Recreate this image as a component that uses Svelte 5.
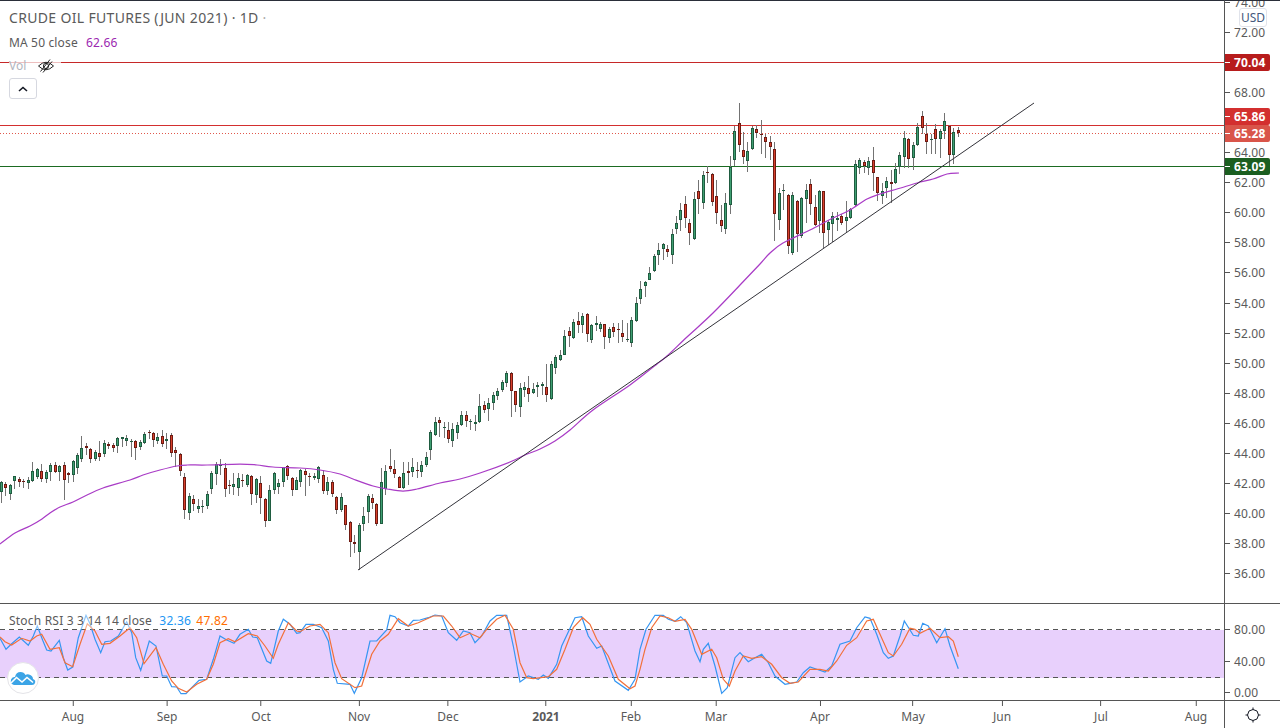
<script>
  const groups = [
    [420, `G 187 217 183 250|R 193 205 185 228|G 196 223 192 240|G 169 184 167 208|R 178 185 172 200|R 184 185 176 204|G 179 190 170 208|G 154 184 127 186|G 148 170 144 178|R 152 176 133 187|G 155 176 150 190|G 136 155 128 184|R 136 155 127 160|G 139 155 135 184|R 136 181 127 240|R 160 166 155 190|G 124 166 120 186|G 106 143 98 163|G 85 118 48 125|R 79 85 70 104|R 88 118 85 128|G 97 118 90 122|R 100 110 63 124|G 70 103 60 112|R 73 79 65 88|R 76 85 70 95|G 55 79 52 100|G 52 58 50 80|G 55 64 45 78|G 63 64 58 112|R 64 85 60 120|G 65 82 60 90|G 43 70 35 72|R 37 40 30 58|R 40 61 35 82|G 52 64 40 72|R 49 73 30 82|G 58 64 40 86|R 46 100 40 110|R 91 100 82 140|R 103 154 100 168|R 172 271 160 296|G 229 280 220 300|R 238 253 225 272|G 259 268 238 278|G 259 260 240 278|G 223 257 212 268|G 160 208 154 222|G 133 163 126 194|G 135 136 118 165|R 145 208 130 230|R 196 199 180 222|G 193 202 160 226|G 175 205 160 228`],
    [420, `R 181 182 162 200|G 166 194 162 200|R 169 221 165 254|G 178 224 175 250|R 190 233 168 282|R 238 302 235 320|G 211 302 195 302|G 160 209 155 222|G 190 200 178 222|G 142 185 140 200|R 139 167 135 180|R 175 209 170 228|G 181 209 172 210|G 151 185 148 200|R 154 164 148 228|R 169 170 158 198|G 169 173 160 180|G 142 176 138 190|R 166 212 150 222|G 187 212 172 225|R 187 221 180 232|R 232 269 228 282|G 232 269 220 275|R 256 314 255 330|R 307 365 302 410|R 367 371 345 400|G 316 395 310 450|G 289 311 262 332|G 229 275 222 308|R 235 248 222 268|R 253 311 250 318|G 187 311 145 312|G 154 208 135 224|R 139 146 87 155|R 148 161 120 175|R 172 203 168 205|G 160 205 126 208|R 154 158 125 195|G 142 157 113 172|R 151 152 125 175|G 136 155 122 170|G 112 136 97 140`],
    [350, `G 246 300 240 330|G 217 255 200 258|R 211 218 200 260|G 232 233 215 263|R 241 266 215 280|G 238 272 220 290|G 226 248 215 266|G 196 226 183 228|R 196 212 183 230|G 214 215 208 240|G 217 221 195 242|G 169 215 133 218|R 166 179 153 190|G 160 176 145 212|G 136 160 127 180|G 124 139 115 150|G 97 121 90 125|G 70 100 62 110|R 70 124 65 200|R 124 164 122 185|G 115 172 100 200|G 112 121 97 140|R 115 133 78 155|G 118 130 100 132|G 106 112 97 140|G 103 109 97 135|R 112 136 42 155|G 43 148 33 150|G 22 55 15 72|G 16 31 0 33`],
    [230, `G 319 374 300 376|R 304 317 290 352|G 277 323 268 326|R 274 284 247 310|G 259 286 250 310|R 253 311 250 335|G 286 329 282 338|G 280 284 258 302|G 283 298 275 305|R 283 320 282 356|G 298 325 290 338|R 292 305 280 320|R 298 299 280 338|R 310 320 270 335|G 328 329 278 335|G 271 338 262 350|G 220 274 200 276|G 178 208 153 222|G 157 169 152 200|G 130 149 112 150|G 79 124 72 126|G 61 74 40 104|G 43 58 38 90|R 58 65 45 80|G 13 76 -3 102`],
    [160, `G 190 206 168 222|G 151 181 128 212|R 133 175 108 205|R 190 220 178 254|G 118 238 97 240|R 94 116 60 162|G 46 130 33 147|R 37 38 18 68|R 43 127 40 138|R 109 160 60 192`],
    [95, `R 376 392 330 410|G 325 403 295 416|G 215 331 183 356|G 109 196 93 213|R 85 151 25 170|R 166 187 110 206|G 169 199 140 230|G 100 161 92 166|R 103 113 90 128|R 116 121 75 178|R 127 142 118 190|R 142 155 122 196|R 163 358 142 437|G 295 376 280 405|G 286 289 268 345|R 301 454 298 478|G 301 473 290 480|R 319 418 316 470|G 310 424 305 428|G 286 313 268 384|R 268 328 252 360|R 337 391 300 394|G 289 379 285 415|R 289 415 287 460|G 382 406 375 450|G 364 388 352 440|G 370 376 350 408|R 364 385 358 390|G 367 379 318 412|G 343 370 340 372|G 208 331 195 335|G 196 220 190 238|R 202 212 195 235|G 199 220 185 240|R 196 235 155 288|R 247 295 245 318|G 289 304 265 328|G 259 280 245 308|R 262 268 225 325|G 223 265 205 268|G 181 217 170 236|G 130 187 108 218|R 133 193 130 218|G 151 190 142 225|G 97 151 85 153|R 64 100 48 118|R 118 142 85 178|G 132 133 118 178|R 103 133 88 176|G 109 133 103 190|G 79 109 55 132|R 94 181 90 212|G 112 181 100 206|R 106 115 97 126`]
  ];
  const candles = [];
  for (const [off, txt] of groups) {
    for (const s of txt.split('|')) {
      const [c, a, b, w1, w2] = s.split(' ');
      const y = (v) => Math.round(off + Number(v) / 3);
      const x = Math.round(1 + candles.length * 4.47);
      const top = y(a);
      const h = Math.max(1, y(b) - top);
      candles.push({ x, up: c === 'G', top, h, wt: y(w1), wh: y(w2) - y(w1) });
    }
  }
  // Catmull-Rom smoothing so that the moving average reads as a curve.
  const smooth = (p) => {
    let out = `M${p[0][0]} ${p[0][1]}`;
    for (let i = 0; i < p.length - 1; i++) {
      const a = p[Math.max(0, i - 1)], b = p[i], c = p[i + 1], d = p[Math.min(p.length - 1, i + 2)];
      const c1x = b[0] + (c[0] - a[0]) / 6, c1y = b[1] + (c[1] - a[1]) / 6;
      const c2x = c[0] - (d[0] - b[0]) / 6, c2y = c[1] - (d[1] - b[1]) / 6;
      out += ` C${c1x.toFixed(1)} ${c1y.toFixed(1)} ${c2x.toFixed(1)} ${c2y.toFixed(1)} ${c[0]} ${c[1]}`;
    }
    return out;
  };
  const ma = smooth([[0,544],[15,533],[30,526],[42,519],[50,513],[60,507],[73,502],[87,495],[103,488],[130,480],[143,475],[160,470],[177,466],[187,465],[207,465],[240,464],[257,465],[273,467],[300,468],[320,470],[340,474],[353,479],[373,486],[387,489],[403,491],[417,489],[440,483],[460,479],[480,473],[510,462],[525,455],[540,449],[555,441],[570,430],[593,410],[630,385],[657,364],[667,356],[687,337],[713,313],[740,285],[760,264],[770,253],[783,243],[810,230],[833,218],[850,210],[867,199],[880,194],[897,189],[917,183],[933,179],[947,174],[959,173]]);

  const seg = (x0, y0, s) => s.trim().split(/\s+/).map((p) => {
    const [a, b] = p.split(',').map(Number);
    return (x0 + a / 3).toFixed(1) + ',' + (y0 + b / 3 - 603).toFixed(1);
  }).join(' ');
  const k = seg(0, 600, '0,112 18,145 35,128 58,108 85,133 100,105 112,75 128,118 140,147 153,150 178,118 190,170 203,207 218,198 235,110 258,43 270,68 285,115 302,155 315,122 332,120 355,105 380,62 395,95 407,170 422,208 448,120 468,135 487,225 500,225 515,257 530,258 543,278 558,278 575,260 597,238 620,235 640,175 660,105 680,117 702,127 720,100 745,85 758,108 772,110 800,180 812,187 835,90 850,55 870,70 890,97')
    + ' ' + seg(300, 605, '0,80 18,55 40,55 65,65 85,105 100,190 112,232 150,235 163,262 185,215 210,105 230,105 260,72 270,28 285,32 300,50 325,60 340,43 360,42 385,35 405,27 425,30 445,80 470,103 490,75 510,80 525,110 545,90 570,45 590,28 620,28 640,120 660,228 685,210 715,220 730,207 745,217 770,175 785,120 825,35 845,32 865,90 890,127 905,120 945,225 985,253 1005,220')
    + ' ' + seg(640, 605, '0,130 18,70 45,28 70,28 85,40 105,46 122,32 140,50 165,135 180,167 190,130 205,112 225,180 245,262 262,245 285,155 300,140 325,167 345,155 365,145 385,170 405,210 435,235 450,232 470,228 490,200 510,183 530,190 555,198 575,180 600,115 630,105 650,65 675,33 690,37 710,85 730,140 745,157 760,150 780,90 793,45 820,88 835,90 848,52 865,60 890,110 915,68 930,120 955,188');
  const d = seg(0, 600, '0,108 15,122 35,132 65,112 90,120 110,105 125,100 150,145 178,140 195,185 218,197 240,130 262,68 285,90 305,130 330,127 360,105 390,80 410,110 432,188 468,140 490,190 515,240 535,262 560,273 590,250 620,235 640,190 660,125 685,113 705,122 745,98 772,105 795,135 820,172 835,130 865,65 890,90')
    + ' ' + seg(300, 605, '0,77 30,60 60,55 85,80 105,170 125,218 165,245 185,240 215,145 240,105 265,85 295,38 325,60 355,50 400,30 430,30 455,60 480,95 510,82 540,95 560,70 590,40 615,28 640,70 660,170 680,215 700,218 745,212 770,190 795,130 820,65 848,35 870,55 890,100 925,150 955,220 990,248 1005,240')
    + ' ' + seg(640, 605, '0,190 15,130 35,65 60,30 85,35 105,46 135,40 155,70 185,145 215,130 230,155 250,220 268,240 285,195 310,150 335,157 365,152 395,175 425,215 450,232 475,228 510,190 540,190 565,195 590,165 620,118 650,95 680,45 700,40 720,85 745,140 760,150 785,115 810,67 825,70 840,82 870,67 900,95 925,92 940,105 955,152');

  const prices = [74,72,68,64,62,60,58,56,54,52,50,48,46,44,42,40,38,36].map((p) => ({
    t: p.toFixed(2), y: Math.round(32 + (72 - p) * 15.03)
  }));
  const marks = [
    { t: '70.04', top: 54, c: '#b71c1c' },
    { t: '65.86', top: 108, c: '#d32f2f' },
    { t: '65.28', top: 125, c: '#d9554a' },
    { t: '63.09', top: 158, c: '#1b5e20' }
  ];
  const subs = [{ t: '80.00', y: 26 }, { t: '40.00', y: 58 }, { t: '0.00', y: 89 }];
  const times = [
    { t: 'Aug', x: 73 }, { t: 'Sep', x: 167 }, { t: 'Oct', x: 261 }, { t: 'Nov', x: 359 },
    { t: 'Dec', x: 448 }, { t: '2021', x: 546, b: true }, { t: 'Feb', x: 631 }, { t: 'Mar', x: 716 },
    { t: 'Apr', x: 820 }, { t: 'May', x: 913 }, { t: 'Jun', x: 1002 }, { t: 'Jul', x: 1101 }, { t: 'Aug', x: 1196 }
  ];
</script>

<div class="chart">
  <div class="pane main">
    <svg class="plot" width="1224" height="603" viewBox="0 0 1224 603">
      <g class="crisp">
        <rect x="0" y="62" width="1224" height="1" fill="#c62828" />
        <rect x="0" y="125" width="1224" height="1" fill="#d32f2f" />
        <line x1="0" x2="1224" y1="133.5" y2="133.5" stroke="#e0584c" stroke-dasharray="1 2" />
        <rect x="0" y="166" width="1224" height="1" fill="#1b6b22" />
        {#each candles as c}
          <rect x={c.x} y={c.wt} width="1" height={c.wh} fill="#737373" />
          <rect x={c.x - 1} y={c.top} width="3" height={c.h} fill={c.up ? '#1f5c40' : '#6e1a12'} />
          {#if c.h > 2}
            <rect x={c.x} y={c.top + 1} width="1" height={c.h - 2} fill={c.up ? '#3f9f72' : '#d8402c'} />
          {/if}
        {/each}
      </g>
      <path d={ma} fill="none" stroke="#a93cc6" stroke-width="1.25" />
      <line x1="358" y1="570" x2="1034" y2="103" stroke="#33333a" stroke-width="1" />
    </svg>
    <div class="legend">
      <div class="row title">CRUDE OIL FUTURES (JUN 2021) · 1D <span class="faint">·</span></div>
      <div class="row ma">MA 50 close <span class="val">62.66</span></div>
      <div class="row vol">
        Vol
        <svg width="18" height="14" viewBox="0 0 18 14" fill="none" stroke="#222" stroke-width="1">
          <path d="M1.5 7 Q9 -0.5 16.5 7 Q9 14.5 1.5 7 Z" />
          <circle cx="9" cy="7" r="2.6" />
          <path d="M3.5 12.5 L13 0.5 M6 13.5 L15 2.5" />
        </svg>
      </div>
      <button class="collapse" aria-label="Collapse">
        <svg width="10" height="6" viewBox="0 0 10 6" fill="none" stroke="#131722" stroke-width="1.6"><path d="M1 5 L5 1.5 L9 5" /></svg>
      </button>
    </div>
  </div>

  <div class="axis price">
    {#each prices as p}
      <div class="tick" style="top:{p.y}px"><i></i><span>{p.t}</span></div>
    {/each}
    {#each marks as m}
      <div class="mark" style="top:{m.top - 1}px;background:{m.c}"><i></i><span>{m.t}</span></div>
    {/each}
    <div class="usd">USD</div>
  </div>

  <div class="pane sub">
    <svg class="plot" width="1224" height="97" viewBox="0 0 1224 97">
      <rect class="crisp" x="0" y="26" width="1224" height="48" fill="#e8d0fc" />
      <line x1="0" x2="1224" y1="25.5" y2="25.5" stroke="#555" stroke-dasharray="5 4" />
      <line x1="0" x2="1224" y1="73.5" y2="73.5" stroke="#555" stroke-dasharray="5 4" />
      <polyline points={k} fill="none" stroke="#3596f2" stroke-width="1.2" />
      <polyline points={d} fill="none" stroke="#f2703a" stroke-width="1.2" />
    </svg>
    <div class="stoch">Stoch RSI 3 3 14 14 close <span class="k">32.36</span> <span class="d">47.82</span></div>
    <div class="logo">
      <svg width="26" height="18" viewBox="0 0 26 18">
        <path d="M4 16 Q0 15 1 10.5 Q2 7.5 5 8 Q6 3 10.5 3 Q14 3 15.5 6 Q17 5 19 5.5 Q23 6.5 23 10 Q26 11 25 14 Q24.5 16 22 16 Z" fill="#3ba4e6" />
        <path d="M1 14 L6.5 8.5 L12 13 L17 8.5 L23 13.5" fill="none" stroke="#fff" stroke-width="1.6" />
      </svg>
    </div>
  </div>

  <div class="axis subaxis">
    {#each subs as p}
      <div class="tick" style="top:{p.y}px"><i></i><span>{p.t}</span></div>
    {/each}
  </div>

  <div class="times">
    {#each times as t}
      <div class="time" class:bold={t.b} style="left:{t.x}px"><i></i><span>{t.t}</span></div>
    {/each}
  </div>

  <div class="corner">
    <svg width="18" height="18" viewBox="0 0 18 18" fill="none" stroke="#131722" stroke-width="1">
      <path d="M9 3.5 L13 5 L14.5 9 L13 13 L9 14.5 L5 13 L3.5 9 L5 5 Z" />
      <path d="M9 1.5 V3.5 M9 14.5 V16.5 M1.5 9 H3.5 M14.5 9 H16.5" />
    </svg>
  </div>
</div>

<style>
  :global(body) {
    margin: 0;
    background: #fff;
  }
  .chart {
    display: grid;
    grid-template-columns: 1224px 56px;
    grid-template-rows: 603px 98px 27px;
    width: 1280px;
    height: 728px;
    overflow: hidden;
    font-family: "Noto Sans", sans-serif;
    color: #5a5a5a;
    background: #fff;
    box-sizing: border-box;
  }
  .pane {
    position: relative;
    overflow: hidden;
  }
  .main {
    border-top: 1px solid #2a2e39;
  }
  .main .plot {
    margin-top: -1px;
  }
  .plot {
    display: block;
  }
  .crisp {
    shape-rendering: crispEdges;
  }
  .legend {
    position: absolute;
    left: 9px;
    top: 0;
    display: flex;
    flex-direction: column;
    align-items: flex-start;
  }
  .row {
    display: flex;
    align-items: center;
    white-space: pre;
  }
  .title {
    font-size: 14px;
    line-height: 20px;
    margin-top: 7px;
    letter-spacing: 0.33px;
  }
  .faint {
    color: #aaa;
  }
  .ma {
    font-size: 12px;
    line-height: 16px;
    margin-top: 7px;
    letter-spacing: 0.15px;
  }
  .val {
    color: #9c27b0;
    margin-left: 5px;
  }
  .vol {
    font-size: 12px;
    line-height: 16px;
    margin-top: 7px;
    color: #b2b5be;
    gap: 8px;
    padding-right: 6px;
    background: rgba(255, 255, 255, 0.7);
  }
  .collapse {
    width: 28px;
    height: 21px;
    margin-top: 4px;
    padding: 0;
    display: flex;
    align-items: center;
    justify-content: center;
    background: #fff;
    border: 1px solid #d6d8e0;
    border-radius: 3px;
  }
  .axis {
    position: relative;
    overflow: hidden;
    border-left: 1px solid #555;
  }
  .price {
    border-top: 1px solid #2a2e39;
  }
  .tick,
  .mark {
    position: absolute;
    left: 0;
    display: flex;
    align-items: center;
    font-size: 12px;
    letter-spacing: 0.12px;
  }
  .tick {
    height: 16px;
    margin-top: -9px;
    color: #5a5a5a;
  }
  .tick i,
  .mark i {
    display: block;
    width: 5px;
    height: 1px;
    background: #555;
    margin-right: 4px;
  }
  .mark {
    width: 45px;
    height: 17px;
    border-radius: 0 2px 2px 0;
    color: #fff;
    font-weight: 700;
  }
  .mark i {
    background: #fff;
  }
  .usd {
    position: absolute;
    left: 14px;
    top: 7px;
    width: 28px;
    height: 19px;
    line-height: 18px;
    text-align: center;
    font-size: 12px;
    box-sizing: border-box;
    background: #fff;
    border: 1px solid #e0e3eb;
    border-radius: 3px;
    color: #44587c;
  }
  .sub {
    border-top: 1px solid #555;
    border-bottom: 1px solid #555;
    box-sizing: border-box;
  }
  .subaxis {
    border-top: 1px solid #555;
    border-bottom: 1px solid #555;
  }
  .stoch {
    position: absolute;
    left: 9px;
    top: 9px;
    font-size: 12px;
    line-height: 16px;
    white-space: pre;
    letter-spacing: 0.2px;
    background: rgba(255, 255, 255, 0.45);
  }
  .k {
    color: #2196f3;
    margin-left: 4px;
  }
  .d {
    color: #ff6d00;
    margin-left: 2px;
  }
  .logo {
    position: absolute;
    left: 7px;
    top: 58px;
    width: 32px;
    height: 32px;
    box-sizing: border-box;
    border-radius: 50%;
    background: #fff;
    border: 1px solid #e4e4e8;
    display: flex;
    align-items: center;
    justify-content: center;
  }
  .times {
    position: relative;
  }
  .time {
    position: absolute;
    top: 0;
    transform: translateX(-50%);
    display: flex;
    flex-direction: column;
    align-items: center;
    font-size: 12px;
    color: #5a5a5a;
  }
  .time i {
    display: block;
    width: 1px;
    height: 5px;
    background: #555;
    margin-bottom: 2px;
  }
  .bold {
    font-weight: 700;
  }
  .corner {
    border-left: 1px solid #555;
    display: flex;
    align-items: center;
    justify-content: center;
  }
</style>
